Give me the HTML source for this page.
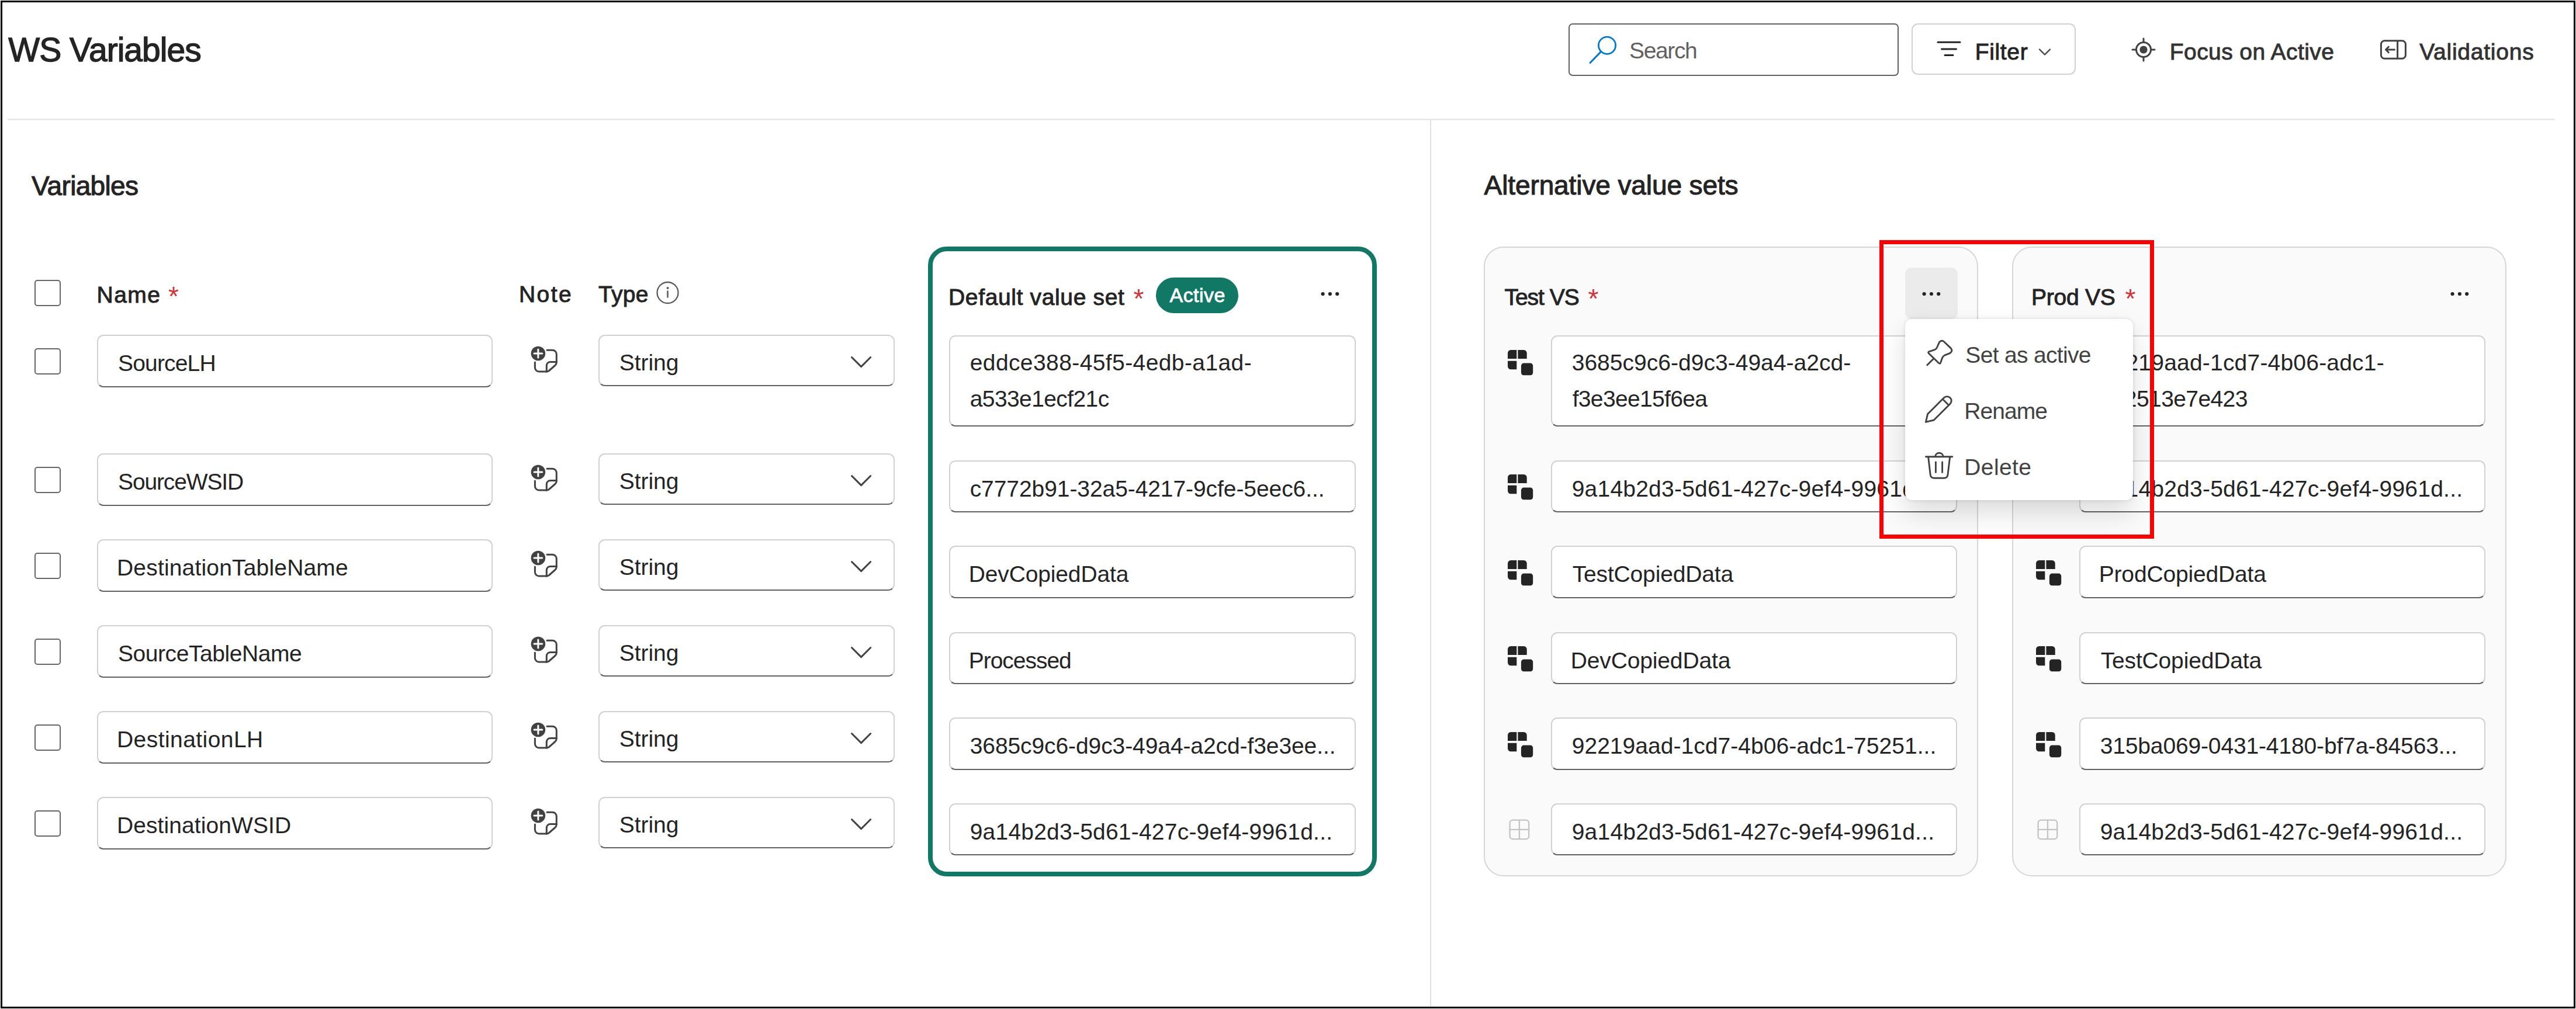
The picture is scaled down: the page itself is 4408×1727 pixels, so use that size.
<!DOCTYPE html>
<html lang="en"><head><meta charset="utf-8"><title>WS Variables</title>
<style>
*{box-sizing:border-box;margin:0;padding:0}
html,body{width:4408px;height:1727px;background:#fff;overflow:hidden}
body{position:relative;font-family:"Liberation Sans", sans-serif;}
#frame{position:absolute;left:1px;top:1px;width:4406px;height:1725px;border:3px solid #000;z-index:20;pointer-events:none}
div,svg.ic,span.t{position:absolute}
.t{white-space:nowrap;display:block}
.sb{-webkit-text-stroke:0.9px currentColor}
.ln{background:#e0e0e0}
.hr{background:linear-gradient(#eee 0,#eee 33%,#e0e0e0 33%,#e0e0e0 67%,#f0f0f0 67%)}
.search{border:2px solid #616161;border-radius:7px;background:#fff}
.btn{border:2px solid #d1d1d1;border-radius:11px;background:#fff}
.cb{border:2px solid #666;border-radius:5px;background:#fff}
.inp{border:2px solid #d1d1d1;border-bottom:2.5px solid #616161;border-radius:11px;background:#fff}
.card{border:2px solid #d6d6d6;border-radius:34px;background:#fafafa}
.card-a{border:8px solid #117865;border-radius:32px;background:#fff}
.badge{background:#117865;border-radius:31px}
.morebg{background:#ebebeb;border-radius:11px}
.menu{background:#fff;border-radius:12px;z-index:5;box-shadow:0 0 6px rgba(0,0,0,.12),0 22px 45px rgba(0,0,0,.14)}
.red{border:7px solid #ff0000;z-index:10}
</style></head><body>
<div id="frame"></div>
<div class="hr" style="left:13px;top:203px;width:4359px;height:3px;"></div>
<div class="ln" style="left:2447px;top:206px;width:2px;height:1517px;"></div>
<div class="search" style="left:2684px;top:40px;width:565px;height:90px;"></div>
<svg class="ic" style="left:2710px;top:55px" width="70" height="64" viewBox="0 0 70 64"><circle cx="40" cy="22.7" r="14.6" fill="none" stroke="#0078d4" stroke-width="2.8"/><path d="M29.6 33.4 L11 52.5" stroke="#0078d4" stroke-width="3" stroke-linecap="round" fill="none"/></svg>
<div class="btn" style="left:3271px;top:40px;width:281px;height:88px;"></div>
<svg class="ic" style="left:3310px;top:64px" width="52" height="40" viewBox="0 0 52 40"><path d="M6 8.3 H44 M12.5 20 H37.5 M18 30.6 H32" stroke="#242424" stroke-width="3" stroke-linecap="round" fill="none"/></svg>
<svg class="ic" style="left:3484px;top:78px" width="30" height="22" viewBox="0 0 30 22"><path d="M6 6.5 L15 15.5 L24 6.5" stroke="#424242" stroke-width="2.4" stroke-linecap="round" stroke-linejoin="round" fill="none"/></svg>
<svg class="ic" style="left:3643px;top:60px" width="50" height="50" viewBox="0 0 50 50"><circle cx="25" cy="25" r="12.5" fill="none" stroke="#424242" stroke-width="3"/><circle cx="25" cy="25" r="6.6" fill="#424242"/><path d="M25 6 V12 M25 38 V44 M6 25 H12 M38 25 H44" stroke="#424242" stroke-width="3" stroke-linecap="round"/></svg>
<svg class="ic" style="left:4068px;top:64px" width="56" height="42" viewBox="0 0 56 42"><rect x="6.4" y="5.7" width="42" height="30.5" rx="6" fill="none" stroke="#424242" stroke-width="3"/><path d="M34.6 5.7 V36.2" stroke="#424242" stroke-width="3" fill="none"/><path d="M29.5 21 H15 M19.3 16.2 L14.5 21 L19.3 25.8" stroke="#424242" stroke-width="3" stroke-linecap="round" stroke-linejoin="round" fill="none"/></svg>
<div class="cb" style="left:59px;top:479px;width:45px;height:45px;"></div>
<svg class="ic" style="left:1118px;top:476px" width="50" height="50" viewBox="0 0 50 50"><circle cx="24.5" cy="25" r="18" fill="none" stroke="#5c5c5c" stroke-width="2.3"/><circle cx="24.5" cy="17" r="2" fill="#5c5c5c"/><path d="M24.5 22.5 V32.5" stroke="#5c5c5c" stroke-width="2.6" stroke-linecap="round"/></svg>
<div class="cb" style="left:59px;top:596px;width:45px;height:45px;"></div>
<div class="inp" style="left:166px;top:573px;width:677px;height:90px;"></div>
<svg class="ic" style="left:890px;top:580px" width="100" height="80" viewBox="0 0 100 80"><g fill="none" stroke="#424242" stroke-width="3" stroke-linecap="round" stroke-linejoin="round"><path d="M46 19.2 H55.3 a7 7 0 0 1 7 7 V39.4"/><path d="M25.4 40 V49 a7 7 0 0 0 7 7 H45.3"/><path d="M62.3 39.4 H51.8 a6.5 6.5 0 0 0 -6.5 6.5 V56"/><path d="M62.3 40.5 c0 2 -1 3.5 -2.5 5 L49.5 54.5 c-1.3 1 -2.6 1.5 -4.2 1.5"/></g><circle cx="30.9" cy="25" r="12.3" fill="#424242"/><path d="M24 25 H37.8 M30.9 18.1 V31.9" stroke="#fff" stroke-width="3" stroke-linecap="round"/></svg>
<div class="inp" style="left:1024px;top:573px;width:507px;height:88px;"></div>
<svg class="ic" style="left:1450px;top:603px" width="48" height="34" viewBox="0 0 48 34"><path d="M7.5 8.5 L23.6 24.6 L39.7 8.5" stroke="#424242" stroke-width="3" stroke-linecap="round" stroke-linejoin="round" fill="none"/></svg>
<div class="cb" style="left:59px;top:799px;width:45px;height:45px;"></div>
<div class="inp" style="left:166px;top:776px;width:677px;height:90px;"></div>
<svg class="ic" style="left:890px;top:783px" width="100" height="80" viewBox="0 0 100 80"><g fill="none" stroke="#424242" stroke-width="3" stroke-linecap="round" stroke-linejoin="round"><path d="M46 19.2 H55.3 a7 7 0 0 1 7 7 V39.4"/><path d="M25.4 40 V49 a7 7 0 0 0 7 7 H45.3"/><path d="M62.3 39.4 H51.8 a6.5 6.5 0 0 0 -6.5 6.5 V56"/><path d="M62.3 40.5 c0 2 -1 3.5 -2.5 5 L49.5 54.5 c-1.3 1 -2.6 1.5 -4.2 1.5"/></g><circle cx="30.9" cy="25" r="12.3" fill="#424242"/><path d="M24 25 H37.8 M30.9 18.1 V31.9" stroke="#fff" stroke-width="3" stroke-linecap="round"/></svg>
<div class="inp" style="left:1024px;top:776px;width:507px;height:88px;"></div>
<svg class="ic" style="left:1450px;top:806px" width="48" height="34" viewBox="0 0 48 34"><path d="M7.5 8.5 L23.6 24.6 L39.7 8.5" stroke="#424242" stroke-width="3" stroke-linecap="round" stroke-linejoin="round" fill="none"/></svg>
<div class="cb" style="left:59px;top:946px;width:45px;height:45px;"></div>
<div class="inp" style="left:166px;top:923px;width:677px;height:90px;"></div>
<svg class="ic" style="left:890px;top:930px" width="100" height="80" viewBox="0 0 100 80"><g fill="none" stroke="#424242" stroke-width="3" stroke-linecap="round" stroke-linejoin="round"><path d="M46 19.2 H55.3 a7 7 0 0 1 7 7 V39.4"/><path d="M25.4 40 V49 a7 7 0 0 0 7 7 H45.3"/><path d="M62.3 39.4 H51.8 a6.5 6.5 0 0 0 -6.5 6.5 V56"/><path d="M62.3 40.5 c0 2 -1 3.5 -2.5 5 L49.5 54.5 c-1.3 1 -2.6 1.5 -4.2 1.5"/></g><circle cx="30.9" cy="25" r="12.3" fill="#424242"/><path d="M24 25 H37.8 M30.9 18.1 V31.9" stroke="#fff" stroke-width="3" stroke-linecap="round"/></svg>
<div class="inp" style="left:1024px;top:923px;width:507px;height:88px;"></div>
<svg class="ic" style="left:1450px;top:953px" width="48" height="34" viewBox="0 0 48 34"><path d="M7.5 8.5 L23.6 24.6 L39.7 8.5" stroke="#424242" stroke-width="3" stroke-linecap="round" stroke-linejoin="round" fill="none"/></svg>
<div class="cb" style="left:59px;top:1093px;width:45px;height:45px;"></div>
<div class="inp" style="left:166px;top:1070px;width:677px;height:90px;"></div>
<svg class="ic" style="left:890px;top:1077px" width="100" height="80" viewBox="0 0 100 80"><g fill="none" stroke="#424242" stroke-width="3" stroke-linecap="round" stroke-linejoin="round"><path d="M46 19.2 H55.3 a7 7 0 0 1 7 7 V39.4"/><path d="M25.4 40 V49 a7 7 0 0 0 7 7 H45.3"/><path d="M62.3 39.4 H51.8 a6.5 6.5 0 0 0 -6.5 6.5 V56"/><path d="M62.3 40.5 c0 2 -1 3.5 -2.5 5 L49.5 54.5 c-1.3 1 -2.6 1.5 -4.2 1.5"/></g><circle cx="30.9" cy="25" r="12.3" fill="#424242"/><path d="M24 25 H37.8 M30.9 18.1 V31.9" stroke="#fff" stroke-width="3" stroke-linecap="round"/></svg>
<div class="inp" style="left:1024px;top:1070px;width:507px;height:88px;"></div>
<svg class="ic" style="left:1450px;top:1100px" width="48" height="34" viewBox="0 0 48 34"><path d="M7.5 8.5 L23.6 24.6 L39.7 8.5" stroke="#424242" stroke-width="3" stroke-linecap="round" stroke-linejoin="round" fill="none"/></svg>
<div class="cb" style="left:59px;top:1240px;width:45px;height:45px;"></div>
<div class="inp" style="left:166px;top:1217px;width:677px;height:90px;"></div>
<svg class="ic" style="left:890px;top:1224px" width="100" height="80" viewBox="0 0 100 80"><g fill="none" stroke="#424242" stroke-width="3" stroke-linecap="round" stroke-linejoin="round"><path d="M46 19.2 H55.3 a7 7 0 0 1 7 7 V39.4"/><path d="M25.4 40 V49 a7 7 0 0 0 7 7 H45.3"/><path d="M62.3 39.4 H51.8 a6.5 6.5 0 0 0 -6.5 6.5 V56"/><path d="M62.3 40.5 c0 2 -1 3.5 -2.5 5 L49.5 54.5 c-1.3 1 -2.6 1.5 -4.2 1.5"/></g><circle cx="30.9" cy="25" r="12.3" fill="#424242"/><path d="M24 25 H37.8 M30.9 18.1 V31.9" stroke="#fff" stroke-width="3" stroke-linecap="round"/></svg>
<div class="inp" style="left:1024px;top:1217px;width:507px;height:88px;"></div>
<svg class="ic" style="left:1450px;top:1247px" width="48" height="34" viewBox="0 0 48 34"><path d="M7.5 8.5 L23.6 24.6 L39.7 8.5" stroke="#424242" stroke-width="3" stroke-linecap="round" stroke-linejoin="round" fill="none"/></svg>
<div class="cb" style="left:59px;top:1387px;width:45px;height:45px;"></div>
<div class="inp" style="left:166px;top:1364px;width:677px;height:90px;"></div>
<svg class="ic" style="left:890px;top:1371px" width="100" height="80" viewBox="0 0 100 80"><g fill="none" stroke="#424242" stroke-width="3" stroke-linecap="round" stroke-linejoin="round"><path d="M46 19.2 H55.3 a7 7 0 0 1 7 7 V39.4"/><path d="M25.4 40 V49 a7 7 0 0 0 7 7 H45.3"/><path d="M62.3 39.4 H51.8 a6.5 6.5 0 0 0 -6.5 6.5 V56"/><path d="M62.3 40.5 c0 2 -1 3.5 -2.5 5 L49.5 54.5 c-1.3 1 -2.6 1.5 -4.2 1.5"/></g><circle cx="30.9" cy="25" r="12.3" fill="#424242"/><path d="M24 25 H37.8 M30.9 18.1 V31.9" stroke="#fff" stroke-width="3" stroke-linecap="round"/></svg>
<div class="inp" style="left:1024px;top:1364px;width:507px;height:88px;"></div>
<svg class="ic" style="left:1450px;top:1394px" width="48" height="34" viewBox="0 0 48 34"><path d="M7.5 8.5 L23.6 24.6 L39.7 8.5" stroke="#424242" stroke-width="3" stroke-linecap="round" stroke-linejoin="round" fill="none"/></svg>
<div class="card-a" style="left:1588px;top:422px;width:768px;height:1078px;"></div>
<div class="badge" style="left:1978px;top:475px;width:141px;height:61px;"></div>
<svg class="ic" style="left:2257.5px;top:497px;" width="36" height="12" viewBox="0 0 36 12"><circle cx="5.6" cy="6" r="3.1" fill="#242424"/><circle cx="17.9" cy="6" r="3.1" fill="#242424"/><circle cx="30.2" cy="6" r="3.1" fill="#242424"/></svg>
<div class="inp" style="left:1624px;top:574px;width:696px;height:156px;"></div>
<div class="inp" style="left:1624px;top:788px;width:696px;height:89px;"></div>
<div class="inp" style="left:1624px;top:934px;width:696px;height:90px;"></div>
<div class="inp" style="left:1624px;top:1082px;width:696px;height:89px;"></div>
<div class="inp" style="left:1624px;top:1228px;width:696px;height:90px;"></div>
<div class="inp" style="left:1624px;top:1375px;width:696px;height:89px;"></div>
<div class="card" style="left:2539px;top:422px;width:846px;height:1078px;"></div>
<div class="morebg" style="left:3260px;top:458px;width:90px;height:88px;"></div>
<svg class="ic" style="left:3287px;top:497px;" width="36" height="12" viewBox="0 0 36 12"><circle cx="5.6" cy="6" r="3.1" fill="#242424"/><circle cx="17.9" cy="6" r="3.1" fill="#242424"/><circle cx="30.2" cy="6" r="3.1" fill="#242424"/></svg>
<div class="inp" style="left:2654px;top:574px;width:695px;height:156px;"></div>
<svg class="ic" style="left:2577.8px;top:597px" width="48" height="48" viewBox="0 0 48 48"><path d="M7.2 2 H17.3 V17 H2 V7.2 A5.2 5.2 0 0 1 7.2 2 Z" fill="#242424"/><path d="M19.4 2 H29.5 A5.2 5.2 0 0 1 34.7 7.2 V17 H19.4 Z" fill="#242424"/><path d="M2 20.7 H17.3 V35.3 H7.2 A5.2 5.2 0 0 1 2 30.1 Z" fill="#242424"/><rect x="22.2" y="21.9" width="25.6" height="26" rx="6.5" fill="#fafafa"/><rect x="24.9" y="24.6" width="20.3" height="20.7" rx="4.5" fill="#242424"/></svg>
<div class="inp" style="left:2654px;top:788px;width:695px;height:89px;"></div>
<svg class="ic" style="left:2577.8px;top:810px" width="48" height="48" viewBox="0 0 48 48"><path d="M7.2 2 H17.3 V17 H2 V7.2 A5.2 5.2 0 0 1 7.2 2 Z" fill="#242424"/><path d="M19.4 2 H29.5 A5.2 5.2 0 0 1 34.7 7.2 V17 H19.4 Z" fill="#242424"/><path d="M2 20.7 H17.3 V35.3 H7.2 A5.2 5.2 0 0 1 2 30.1 Z" fill="#242424"/><rect x="22.2" y="21.9" width="25.6" height="26" rx="6.5" fill="#fafafa"/><rect x="24.9" y="24.6" width="20.3" height="20.7" rx="4.5" fill="#242424"/></svg>
<div class="inp" style="left:2654px;top:934px;width:695px;height:90px;"></div>
<svg class="ic" style="left:2577.8px;top:957px" width="48" height="48" viewBox="0 0 48 48"><path d="M7.2 2 H17.3 V17 H2 V7.2 A5.2 5.2 0 0 1 7.2 2 Z" fill="#242424"/><path d="M19.4 2 H29.5 A5.2 5.2 0 0 1 34.7 7.2 V17 H19.4 Z" fill="#242424"/><path d="M2 20.7 H17.3 V35.3 H7.2 A5.2 5.2 0 0 1 2 30.1 Z" fill="#242424"/><rect x="22.2" y="21.9" width="25.6" height="26" rx="6.5" fill="#fafafa"/><rect x="24.9" y="24.6" width="20.3" height="20.7" rx="4.5" fill="#242424"/></svg>
<div class="inp" style="left:2654px;top:1082px;width:695px;height:89px;"></div>
<svg class="ic" style="left:2577.8px;top:1104px" width="48" height="48" viewBox="0 0 48 48"><path d="M7.2 2 H17.3 V17 H2 V7.2 A5.2 5.2 0 0 1 7.2 2 Z" fill="#242424"/><path d="M19.4 2 H29.5 A5.2 5.2 0 0 1 34.7 7.2 V17 H19.4 Z" fill="#242424"/><path d="M2 20.7 H17.3 V35.3 H7.2 A5.2 5.2 0 0 1 2 30.1 Z" fill="#242424"/><rect x="22.2" y="21.9" width="25.6" height="26" rx="6.5" fill="#fafafa"/><rect x="24.9" y="24.6" width="20.3" height="20.7" rx="4.5" fill="#242424"/></svg>
<div class="inp" style="left:2654px;top:1228px;width:695px;height:90px;"></div>
<svg class="ic" style="left:2577.8px;top:1251px" width="48" height="48" viewBox="0 0 48 48"><path d="M7.2 2 H17.3 V17 H2 V7.2 A5.2 5.2 0 0 1 7.2 2 Z" fill="#242424"/><path d="M19.4 2 H29.5 A5.2 5.2 0 0 1 34.7 7.2 V17 H19.4 Z" fill="#242424"/><path d="M2 20.7 H17.3 V35.3 H7.2 A5.2 5.2 0 0 1 2 30.1 Z" fill="#242424"/><rect x="22.2" y="21.9" width="25.6" height="26" rx="6.5" fill="#fafafa"/><rect x="24.9" y="24.6" width="20.3" height="20.7" rx="4.5" fill="#242424"/></svg>
<div class="inp" style="left:2654px;top:1375px;width:695px;height:89px;"></div>
<svg class="ic" style="left:2579.8px;top:1400px" width="40" height="40" viewBox="0 0 40 40"><rect x="3.6" y="3.6" width="32.6" height="32.6" rx="5" fill="none" stroke="#c4c4c4" stroke-width="2.3"/><path d="M19.9 3.6 V36.2 M3.6 19.9 H36.2" stroke="#c4c4c4" stroke-width="2.3"/></svg>
<div class="card" style="left:3443px;top:422px;width:846px;height:1078px;"></div>
<svg class="ic" style="left:4190.5px;top:497px;" width="36" height="12" viewBox="0 0 36 12"><circle cx="5.6" cy="6" r="3.1" fill="#242424"/><circle cx="17.9" cy="6" r="3.1" fill="#242424"/><circle cx="30.2" cy="6" r="3.1" fill="#242424"/></svg>
<div class="inp" style="left:3558px;top:574px;width:695px;height:156px;"></div>
<svg class="ic" style="left:3481.5px;top:597px" width="48" height="48" viewBox="0 0 48 48"><path d="M7.2 2 H17.3 V17 H2 V7.2 A5.2 5.2 0 0 1 7.2 2 Z" fill="#242424"/><path d="M19.4 2 H29.5 A5.2 5.2 0 0 1 34.7 7.2 V17 H19.4 Z" fill="#242424"/><path d="M2 20.7 H17.3 V35.3 H7.2 A5.2 5.2 0 0 1 2 30.1 Z" fill="#242424"/><rect x="22.2" y="21.9" width="25.6" height="26" rx="6.5" fill="#fafafa"/><rect x="24.9" y="24.6" width="20.3" height="20.7" rx="4.5" fill="#242424"/></svg>
<div class="inp" style="left:3558px;top:788px;width:695px;height:89px;"></div>
<svg class="ic" style="left:3481.5px;top:810px" width="48" height="48" viewBox="0 0 48 48"><path d="M7.2 2 H17.3 V17 H2 V7.2 A5.2 5.2 0 0 1 7.2 2 Z" fill="#242424"/><path d="M19.4 2 H29.5 A5.2 5.2 0 0 1 34.7 7.2 V17 H19.4 Z" fill="#242424"/><path d="M2 20.7 H17.3 V35.3 H7.2 A5.2 5.2 0 0 1 2 30.1 Z" fill="#242424"/><rect x="22.2" y="21.9" width="25.6" height="26" rx="6.5" fill="#fafafa"/><rect x="24.9" y="24.6" width="20.3" height="20.7" rx="4.5" fill="#242424"/></svg>
<div class="inp" style="left:3558px;top:934px;width:695px;height:90px;"></div>
<svg class="ic" style="left:3481.5px;top:957px" width="48" height="48" viewBox="0 0 48 48"><path d="M7.2 2 H17.3 V17 H2 V7.2 A5.2 5.2 0 0 1 7.2 2 Z" fill="#242424"/><path d="M19.4 2 H29.5 A5.2 5.2 0 0 1 34.7 7.2 V17 H19.4 Z" fill="#242424"/><path d="M2 20.7 H17.3 V35.3 H7.2 A5.2 5.2 0 0 1 2 30.1 Z" fill="#242424"/><rect x="22.2" y="21.9" width="25.6" height="26" rx="6.5" fill="#fafafa"/><rect x="24.9" y="24.6" width="20.3" height="20.7" rx="4.5" fill="#242424"/></svg>
<div class="inp" style="left:3558px;top:1082px;width:695px;height:89px;"></div>
<svg class="ic" style="left:3481.5px;top:1104px" width="48" height="48" viewBox="0 0 48 48"><path d="M7.2 2 H17.3 V17 H2 V7.2 A5.2 5.2 0 0 1 7.2 2 Z" fill="#242424"/><path d="M19.4 2 H29.5 A5.2 5.2 0 0 1 34.7 7.2 V17 H19.4 Z" fill="#242424"/><path d="M2 20.7 H17.3 V35.3 H7.2 A5.2 5.2 0 0 1 2 30.1 Z" fill="#242424"/><rect x="22.2" y="21.9" width="25.6" height="26" rx="6.5" fill="#fafafa"/><rect x="24.9" y="24.6" width="20.3" height="20.7" rx="4.5" fill="#242424"/></svg>
<div class="inp" style="left:3558px;top:1228px;width:695px;height:90px;"></div>
<svg class="ic" style="left:3481.5px;top:1251px" width="48" height="48" viewBox="0 0 48 48"><path d="M7.2 2 H17.3 V17 H2 V7.2 A5.2 5.2 0 0 1 7.2 2 Z" fill="#242424"/><path d="M19.4 2 H29.5 A5.2 5.2 0 0 1 34.7 7.2 V17 H19.4 Z" fill="#242424"/><path d="M2 20.7 H17.3 V35.3 H7.2 A5.2 5.2 0 0 1 2 30.1 Z" fill="#242424"/><rect x="22.2" y="21.9" width="25.6" height="26" rx="6.5" fill="#fafafa"/><rect x="24.9" y="24.6" width="20.3" height="20.7" rx="4.5" fill="#242424"/></svg>
<div class="inp" style="left:3558px;top:1375px;width:695px;height:89px;"></div>
<svg class="ic" style="left:3483.5px;top:1400px" width="40" height="40" viewBox="0 0 40 40"><rect x="3.6" y="3.6" width="32.6" height="32.6" rx="5" fill="none" stroke="#c4c4c4" stroke-width="2.3"/><path d="M19.9 3.6 V36.2 M3.6 19.9 H36.2" stroke="#c4c4c4" stroke-width="2.3"/></svg>
<div class="menu" style="left:3260px;top:546px;width:390px;height:310px;"></div>
<svg class="ic" style="left:3270px;top:560px;z-index:6" width="90" height="90" viewBox="0 0 90 90"><g fill="none" stroke="#424242" stroke-width="2.9" stroke-linecap="round" stroke-linejoin="round"><path d="M48.6 25.6 Q52.6 21.2 57 25.2 L67.8 35.6 Q72.5 40.5 67 44.3 L57.5 48.2 Q54.6 49.5 53.5 52.8 L50.6 61 Q49.6 63.3 47.6 61.5 L30.4 44.8 Q28.6 42.8 31.2 41.7 L40.5 38.6 Q43.3 37.6 44.4 35 Z"/><path d="M38.7 54 L27.8 64.7"/></g></svg>
<svg class="ic" style="left:3270px;top:660px;z-index:6" width="90" height="80" viewBox="0 0 90 80"><g fill="none" stroke="#424242" stroke-width="2.9" stroke-linecap="round" stroke-linejoin="round"><path d="M25.4 62.3 L28.6 48.6 L56.5 20.8 A7.4 7.4 0 0 1 67 31.3 L39.2 59 Z"/><path d="M55.6 24.5 L63.6 32.5"/></g></svg>
<svg class="ic" style="left:3270px;top:760px;z-index:6" width="90" height="80" viewBox="0 0 90 80"><g fill="none" stroke="#424242" stroke-width="2.9" stroke-linecap="round" stroke-linejoin="round"><path d="M25.5 21.8 H70.8"/><path d="M41.4 21.4 A7 7 0 0 1 55.3 21.4"/><path d="M29.7 22.5 L33.2 52.6 Q33.9 58.2 39.6 58.2 H56.6 Q62.3 58.2 63 52.6 L66.6 22.5"/><path d="M42.4 31 V48.5 M53.6 31 V48.5"/></g></svg>
<div class="red" style="left:3216px;top:411px;width:470px;height:511px;"></div>
<span class="t sb" id="t0" style="left:14.3px;top:57.3px;font-size:57px;line-height:57px;color:#242424;letter-spacing:-0.959px;-webkit-text-stroke:1.37px currentColor;">WS Variables</span>
<span class="t" id="t1" style="left:2788.0px;top:67.0px;font-size:39px;line-height:39px;color:#616161;letter-spacing:-1.376px;">Search</span>
<span class="t sb" id="t2" style="left:3379.7px;top:68.5px;font-size:39px;line-height:39px;color:#242424;letter-spacing:0.665px;-webkit-text-stroke:0.94px currentColor;">Filter</span>
<span class="t sb" id="t3" style="left:3712.8px;top:68.5px;font-size:39px;line-height:39px;color:#333333;letter-spacing:0.410px;-webkit-text-stroke:0.94px currentColor;">Focus on Active</span>
<span class="t sb" id="t4" style="left:4140.2px;top:68.6px;font-size:39px;line-height:39px;color:#333333;letter-spacing:0.760px;-webkit-text-stroke:0.94px currentColor;">Validations</span>
<span class="t sb" id="t5" style="left:54.0px;top:294.7px;font-size:46px;line-height:46px;color:#242424;letter-spacing:-0.670px;-webkit-text-stroke:1.10px currentColor;">Variables</span>
<span class="t sb" id="t6" style="left:165.6px;top:484.6px;font-size:39px;line-height:39px;color:#242424;letter-spacing:1.419px;-webkit-text-stroke:0.94px currentColor;">Name</span>
<span class="t" id="t7" style="left:288.0px;top:484.1px;font-size:46px;line-height:46px;color:#d13438;">*</span>
<span class="t sb" id="t8" style="left:888.0px;top:484.0px;font-size:39px;line-height:39px;color:#242424;letter-spacing:2.437px;-webkit-text-stroke:0.94px currentColor;">Note</span>
<span class="t sb" id="t9" style="left:1024.0px;top:484.0px;font-size:39px;line-height:39px;color:#242424;letter-spacing:0.280px;-webkit-text-stroke:0.94px currentColor;">Type</span>
<span class="t" id="t10" style="left:202.0px;top:601.5px;font-size:39px;line-height:39px;color:#242424;letter-spacing:-0.837px;">SourceLH</span>
<span class="t" id="t11" style="left:1059.7px;top:600.8px;font-size:39px;line-height:39px;color:#242424;letter-spacing:-0.038px;">String</span>
<span class="t" id="t12" style="left:202.0px;top:804.5px;font-size:39px;line-height:39px;color:#242424;letter-spacing:-1.136px;">SourceWSID</span>
<span class="t" id="t13" style="left:1059.7px;top:803.8px;font-size:39px;line-height:39px;color:#242424;letter-spacing:-0.038px;">String</span>
<span class="t" id="t14" style="left:200.0px;top:951.5px;font-size:39px;line-height:39px;color:#242424;letter-spacing:0.174px;">DestinationTableName</span>
<span class="t" id="t15" style="left:1059.7px;top:950.8px;font-size:39px;line-height:39px;color:#242424;letter-spacing:-0.038px;">String</span>
<span class="t" id="t16" style="left:202.0px;top:1098.5px;font-size:39px;line-height:39px;color:#242424;letter-spacing:-0.439px;">SourceTableName</span>
<span class="t" id="t17" style="left:1059.7px;top:1097.8px;font-size:39px;line-height:39px;color:#242424;letter-spacing:-0.038px;">String</span>
<span class="t" id="t18" style="left:200.0px;top:1245.5px;font-size:39px;line-height:39px;color:#242424;letter-spacing:0.433px;">DestinationLH</span>
<span class="t" id="t19" style="left:1059.7px;top:1244.8px;font-size:39px;line-height:39px;color:#242424;letter-spacing:-0.038px;">String</span>
<span class="t" id="t20" style="left:200.0px;top:1392.5px;font-size:39px;line-height:39px;color:#242424;letter-spacing:0.088px;">DestinationWSID</span>
<span class="t" id="t21" style="left:1059.7px;top:1391.8px;font-size:39px;line-height:39px;color:#242424;letter-spacing:-0.038px;">String</span>
<span class="t sb" id="t22" style="left:1623.0px;top:488.5px;font-size:39px;line-height:39px;color:#242424;letter-spacing:0.646px;-webkit-text-stroke:0.94px currentColor;">Default value set</span>
<span class="t" id="t23" style="left:1939.6px;top:487.6px;font-size:46px;line-height:46px;color:#d13438;">*</span>
<span class="t sb" id="t24" style="left:2001.5px;top:487.6px;font-size:34px;line-height:34px;color:#ffffff;letter-spacing:0.464px;-webkit-text-stroke:0.82px currentColor;">Active</span>
<span class="t" id="t25" style="left:1659.7px;top:601.2px;font-size:39px;line-height:39px;color:#242424;letter-spacing:0.404px;">eddce388-45f5-4edb-a1ad-</span>
<span class="t" id="t26" style="left:1659.7px;top:663.2px;font-size:39px;line-height:39px;color:#242424;letter-spacing:-0.595px;">a533e1ecf21c</span>
<span class="t" id="t27" style="left:1659.7px;top:816.5px;font-size:39px;line-height:39px;color:#242424;letter-spacing:-0.079px;">c7772b91-32a5-4217-9cfe-5eec6...</span>
<span class="t" id="t28" style="left:1657.7px;top:962.5px;font-size:39px;line-height:39px;color:#242424;letter-spacing:-0.136px;">DevCopiedData</span>
<span class="t" id="t29" style="left:1657.7px;top:1110.5px;font-size:39px;line-height:39px;color:#242424;letter-spacing:-1.021px;">Processed</span>
<span class="t" id="t30" style="left:1659.7px;top:1256.5px;font-size:39px;line-height:39px;color:#242424;letter-spacing:-0.092px;">3685c9c6-d9c3-49a4-a2cd-f3e3ee...</span>
<span class="t" id="t31" style="left:1659.7px;top:1403.5px;font-size:39px;line-height:39px;color:#242424;letter-spacing:0.215px;">9a14b2d3-5d61-427c-9ef4-9961d...</span>
<span class="t sb" id="t32" style="left:2539.6px;top:294.0px;font-size:46px;line-height:46px;color:#242424;letter-spacing:-0.106px;-webkit-text-stroke:1.10px currentColor;">Alternative value sets</span>
<span class="t sb" id="t33" style="left:2574.4px;top:488.5px;font-size:39px;line-height:39px;color:#242424;letter-spacing:-1.012px;-webkit-text-stroke:0.94px currentColor;">Test VS</span>
<span class="t" id="t34" style="left:2717.5px;top:487.6px;font-size:46px;line-height:46px;color:#d13438;">*</span>
<span class="t" id="t35" style="left:2689.7px;top:601.2px;font-size:39px;line-height:39px;color:#242424;letter-spacing:0.022px;">3685c9c6-d9c3-49a4-a2cd-</span>
<span class="t" id="t36" style="left:2690.7px;top:663.2px;font-size:39px;line-height:39px;color:#242424;letter-spacing:-0.671px;">f3e3ee15f6ea</span>
<span class="t" id="t37" style="left:2689.7px;top:816.5px;font-size:39px;line-height:39px;color:#242424;letter-spacing:0.215px;">9a14b2d3-5d61-427c-9ef4-9961d...</span>
<span class="t" id="t38" style="left:2690.7px;top:962.5px;font-size:39px;line-height:39px;color:#242424;letter-spacing:-0.161px;">TestCopiedData</span>
<span class="t" id="t39" style="left:2687.7px;top:1110.5px;font-size:39px;line-height:39px;color:#242424;letter-spacing:-0.136px;">DevCopiedData</span>
<span class="t" id="t40" style="left:2689.7px;top:1256.5px;font-size:39px;line-height:39px;color:#242424;letter-spacing:0.039px;">92219aad-1cd7-4b06-adc1-75251...</span>
<span class="t" id="t41" style="left:2689.7px;top:1403.5px;font-size:39px;line-height:39px;color:#242424;letter-spacing:0.215px;">9a14b2d3-5d61-427c-9ef4-9961d...</span>
<span class="t sb" id="t42" style="left:3476.0px;top:488.5px;font-size:39px;line-height:39px;color:#242424;letter-spacing:-0.255px;-webkit-text-stroke:0.94px currentColor;">Prod VS</span>
<span class="t" id="t43" style="left:3636.5px;top:487.6px;font-size:46px;line-height:46px;color:#d13438;">*</span>
<span class="t" id="t44" style="left:3593.7px;top:601.2px;font-size:39px;line-height:39px;color:#242424;letter-spacing:0.201px;">92219aad-1cd7-4b06-adc1-</span>
<span class="t" id="t45" style="left:3592.7px;top:663.2px;font-size:39px;line-height:39px;color:#242424;letter-spacing:-0.599px;">752513e7e423</span>
<span class="t" id="t46" style="left:3593.7px;top:816.5px;font-size:39px;line-height:39px;color:#242424;letter-spacing:0.215px;">9a14b2d3-5d61-427c-9ef4-9961d...</span>
<span class="t" id="t47" style="left:3591.7px;top:962.5px;font-size:39px;line-height:39px;color:#242424;letter-spacing:-0.165px;">ProdCopiedData</span>
<span class="t" id="t48" style="left:3594.7px;top:1110.5px;font-size:39px;line-height:39px;color:#242424;letter-spacing:-0.161px;">TestCopiedData</span>
<span class="t" id="t49" style="left:3593.7px;top:1256.5px;font-size:39px;line-height:39px;color:#242424;letter-spacing:-0.148px;">315ba069-0431-4180-bf7a-84563...</span>
<span class="t" id="t50" style="left:3593.7px;top:1403.5px;font-size:39px;line-height:39px;color:#242424;letter-spacing:0.215px;">9a14b2d3-5d61-427c-9ef4-9961d...</span>
<span class="t" id="t51" style="left:3363.3px;top:588.0px;font-size:39px;line-height:39px;color:#424242;letter-spacing:-0.674px;z-index:6;">Set as active</span>
<span class="t" id="t52" style="left:3361.3px;top:683.8px;font-size:39px;line-height:39px;color:#424242;letter-spacing:-0.944px;z-index:6;">Rename</span>
<span class="t" id="t53" style="left:3361.3px;top:779.9px;font-size:39px;line-height:39px;color:#424242;letter-spacing:0.391px;z-index:6;">Delete</span>
</body></html>
